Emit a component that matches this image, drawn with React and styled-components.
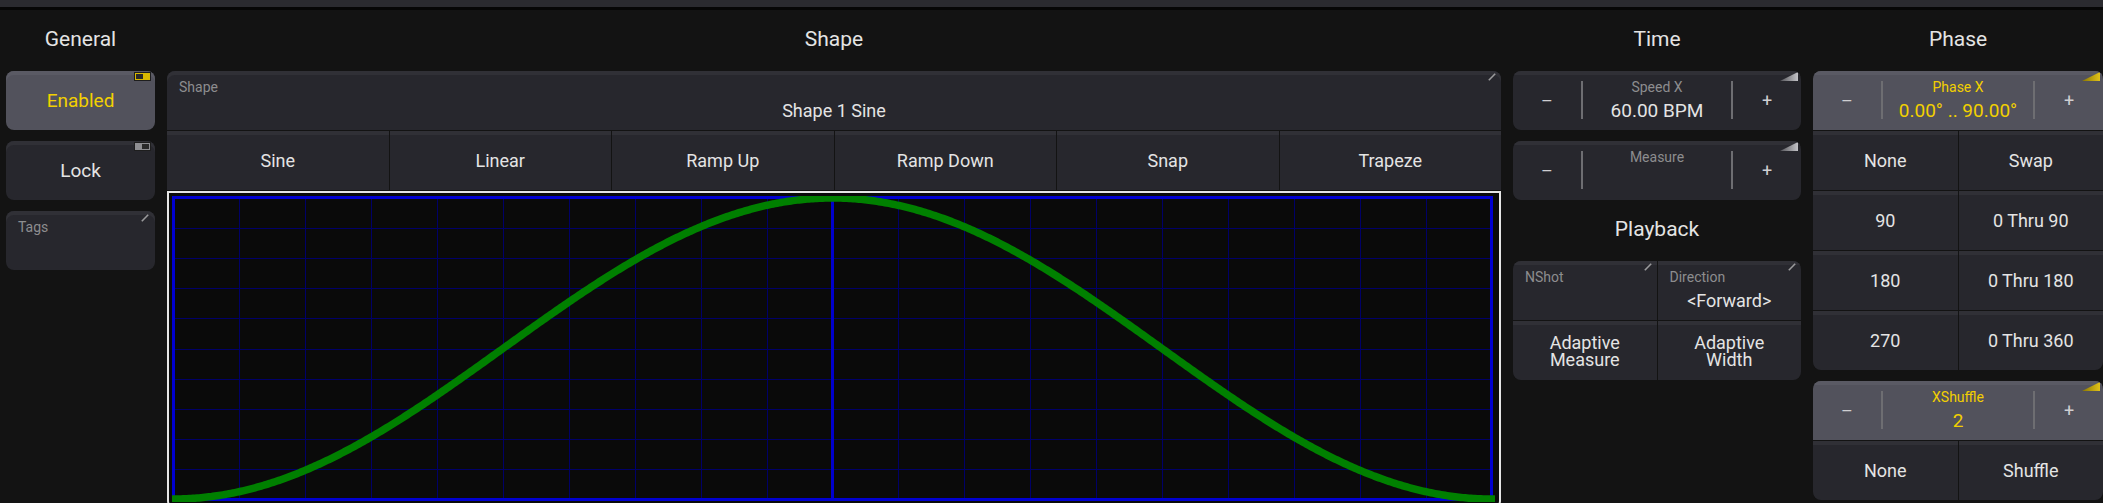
import React from 'react';
import styled, {createGlobalStyle} from 'styled-components';

const BG = '#131313';
const KEY = '#27272d';
const KEY_TOP = '#303036';
const KEY_ACTIVE = '#52525c';
const KEY_ACTIVE_TOP = '#5a5a64';
const TEXT = '#e4e4e4';
const LABEL = '#8d8d8f';
const YELLOW = '#f2d000';

const GlobalStyle = createGlobalStyle`
  html, body {
    margin: 0;
    padding: 0;
    background: ${BG};
  }
  body {
    font-family: Roboto, "Liberation Sans", sans-serif;
  }
`;

const Screen = styled.div`
  width: 2103px;
  height: 503px;
  overflow: hidden;
  background: ${BG};
  display: flex;
  flex-direction: column;
`;

const TopStrip = styled.div`
  flex: none;
  height: 7px;
  background: #2b2b30;
  border-bottom: 3px solid #070707;
`;

const Columns = styled.div`
  display: flex;
  gap: 12px;
  padding-left: 6px;
  flex: 1;
  min-height: 0;
`;

const Column = styled.div`
  flex: none;
  width: ${p => p.$width}px;
  display: flex;
  flex-direction: column;

  & > * {
    flex-shrink: 0;
  }
`;

const Title = styled.div`
  height: 61px;
  box-sizing: border-box;
  padding-bottom: 3px;
  display: flex;
  align-items: center;
  justify-content: center;
  font-size: 21px;
  color: ${TEXT};
`;

const Stack = styled.div`
  display: flex;
  flex-direction: column;
  gap: 11px;
`;

const Key = styled.div`
  position: relative;
  height: 59px;
  border-radius: 8px;
  background: ${p => (p.$active ? KEY_ACTIVE : KEY)};
  box-shadow: inset 0 4px 0 ${p => (p.$active ? KEY_ACTIVE_TOP : KEY_TOP)};
  color: ${p => (p.$yellow ? YELLOW : TEXT)};
  font-size: 19px;
  display: flex;
  align-items: center;
  justify-content: center;
`;

const TagsKey = styled(Key)`
  align-items: flex-start;
  justify-content: flex-start;
  padding: 8px 12px;
  box-sizing: border-box;
  font-size: 14px;
  line-height: 16px;
  color: ${LABEL};
`;

// small on/off indicator in the corner of a toggle key
const Toggle = styled.div`
  position: absolute;
  top: 1px;
  right: 4px;
  width: 17px;
  height: 9px;
  box-sizing: border-box;
  border: 1px solid #1e1e1e;
  background: ${p => (p.$on ? '#d8b800' : '#8e8e92')};
  display: flex;
  justify-content: ${p => (p.$on ? 'flex-start' : 'flex-end')};
  padding: 1px;

  &::after {
    content: '';
    width: 7px;
    height: 5px;
    background: #2a2a2a;
  }
`;

const Corner = styled.div`
  position: absolute;
  top: ${p => p.$top ?? 2}px;
  right: ${p => p.$right ?? 5}px;
  line-height: 0;
`;

const Pencil = ({top, right}) => (
  <Corner $top={top} $right={right}>
    <svg width="8" height="8" viewBox="0 0 8 8">
      <line x1="0.8" y1="7.2" x2="7.2" y2="0.8" stroke="#9a9a9c" strokeWidth="1.6" />
    </svg>
  </Corner>
);

const Wedge = ({yellow, id}) => (
  <Corner $top={1} $right={3}>
    <svg width="18" height="9" viewBox="0 0 18 9">
      <defs>
        <linearGradient id={id} x1="0" y1="0" x2="1" y2="0">
          <stop offset="0" stopColor={yellow ? '#8a7600' : '#55555a'} />
          <stop offset="1" stopColor={yellow ? '#e0c21a' : '#c4c4c8'} />
        </linearGradient>
      </defs>
      <polygon points="0,9 18,9 18,0" fill={`url(#${id})`} />
    </svg>
  </Corner>
);

// grid of keys that share one rounded outline
const Panel = styled.div`
  display: grid;
  grid-template-columns: ${p => p.$cols || '1fr 1fr'};
  grid-auto-rows: 59px;
  gap: 1px;
  background: ${BG};
  border-radius: 8px;
  overflow: hidden;
`;

const Cell = styled.div`
  position: relative;
  background: ${KEY};
  box-shadow: inset 0 4px 0 ${KEY_TOP};
  color: ${TEXT};
  font-size: 18px;
  line-height: 17px;
  display: flex;
  align-items: center;
  justify-content: center;
  text-align: center;
`;

const FieldCell = styled(Cell)`
  flex-direction: column;
  align-items: stretch;
  justify-content: flex-start;
  padding: 8px 12px 0;
`;

const FieldLabel = styled.div`
  font-size: 14px;
  line-height: 16px;
  color: ${LABEL};
  text-align: left;
`;

const FieldValue = styled.div`
  margin-top: 5px;
  font-size: 18px;
  line-height: 22px;
  color: ${TEXT};
  text-align: center;
`;

const SpinBox = styled.div`
  position: relative;
  grid-column: 1 / -1;
  display: grid;
  grid-template-columns: 68px 2px 1fr 2px 68px;
  background: ${p => (p.$active ? KEY_ACTIVE : KEY)};
  box-shadow: inset 0 4px 0 ${p => (p.$active ? KEY_ACTIVE_TOP : KEY_TOP)};
  color: ${p => (p.$active ? YELLOW : TEXT)};
`;

const SpinSign = styled.div`
  display: flex;
  align-items: center;
  justify-content: center;
  font-size: 18px;
  color: #cfcfd2;
`;

const SpinRule = styled.div`
  margin: 10px 0 11px;
  background: #6e6e72;
`;

const SpinCenter = styled.div`
  display: flex;
  flex-direction: column;
  align-items: center;
  padding-top: 8px;
`;

const SpinLabel = styled.div`
  font-size: 14px;
  line-height: 16px;
  color: ${p => (p.$active ? YELLOW : LABEL)};
`;

const SpinValue = styled.div`
  margin-top: 5px;
  font-size: 19px;
  line-height: 22px;
`;

const Spinner = ({label, value, active, id}) => (
  <SpinBox $active={active}>
    <SpinSign>–</SpinSign>
    <SpinRule />
    <SpinCenter>
      <SpinLabel $active={active}>{label}</SpinLabel>
      {value ? <SpinValue>{value}</SpinValue> : null}
    </SpinCenter>
    <SpinRule />
    <SpinSign>+</SpinSign>
    <Wedge yellow={active} id={id} />
  </SpinBox>
);

const ShapeField = styled.div`
  position: relative;
  height: 59px;
  box-sizing: border-box;
  padding: 8px 12px 0;
  border-radius: 8px 8px 0 0;
  background: ${KEY};
  box-shadow: inset 0 4px 0 ${KEY_TOP};
  display: flex;
  flex-direction: column;
`;

const ShapeButtons = styled.div`
  display: grid;
  grid-template-columns: repeat(6, 1fr);
  grid-auto-rows: 59px;
  gap: 1px;
  margin-top: 1px;
`;

const PlotFrame = styled.div`
  margin-top: 1px;
  height: 316px;
  box-sizing: border-box;
  border: 2px solid #e6e6e6;
  border-radius: 0 0 6px 6px;
  background: #0a0a0a;
  padding: 3px;
  line-height: 0;
`;

const PLOT_W = 1324;
const PLOT_H = 306;

function ShapePlot() {
  const x0 = 1.5;
  const x1 = 1319.5;
  const y0 = 1.5;
  const y1 = 303.5;
  const cols = 20;
  const rows = 10;
  const colW = (x1 - x0) / cols;
  const rowH = (y1 - y0) / rows;

  const verticals = [];
  for (let i = 1; i < cols; i++) {
    if (i === cols / 2) continue;
    verticals.push(Math.round(x0 + i * colW) + 0.5);
  }
  const horizontals = [];
  for (let j = 1; j < rows; j++) horizontals.push(Math.round(y0 + j * rowH) + 0.5);

  const curve = [];
  for (let x = -3; x <= PLOT_W; x += 2) {
    const t = (x - x0) / (x1 - x0);
    const y = 303 - 301 * (1 - Math.cos(2 * Math.PI * t)) / 2;
    curve.push(`${x.toFixed(1)},${y.toFixed(2)}`);
  }

  return (
    <svg width={PLOT_W} height={PLOT_H} viewBox={`0 0 ${PLOT_W} ${PLOT_H}`}>
      {verticals.map(x => (
        <line key={`v${x}`} x1={x} y1={y0} x2={x} y2={y1} stroke="#000068" strokeWidth="1" />
      ))}
      {horizontals.map(y => (
        <line key={`h${y}`} x1={x0} y1={y} x2={x1} y2={y} stroke="#000068" strokeWidth="1" />
      ))}
      <line x1={(x0 + x1) / 2} y1={y0} x2={(x0 + x1) / 2} y2={y1} stroke="#0000cc" strokeWidth="3" />
      <rect x={x0} y={y0} width={x1 - x0} height={y1 - y0} fill="none" stroke="#0000d0" strokeWidth="3" />
      <polyline points={curve.join(' ')} fill="none" stroke="#008000" strokeWidth="7.5" />
    </svg>
  );
}

const shapes = ['Sine', 'Linear', 'Ramp Up', 'Ramp Down', 'Snap', 'Trapeze'];

const phaseRows = [
  ['None', 'Swap'],
  ['90', '0 Thru 90'],
  ['180', '0 Thru 180'],
  ['270', '0 Thru 360']
];

export default function App() {
  return (
    <Screen>
      <GlobalStyle />
      <TopStrip />
      <Columns>
        <Column $width={149}>
          <Title>General</Title>
          <Stack>
            <Key $active $yellow>
              Enabled
              <Toggle $on />
            </Key>
            <Key>
              Lock
              <Toggle />
            </Key>
            <TagsKey>
              Tags
              <Pencil top={3} right={6} />
            </TagsKey>
          </Stack>
        </Column>

        <Column $width={1334}>
          <Title>Shape</Title>
          <ShapeField>
            <FieldLabel>Shape</FieldLabel>
            <FieldValue>Shape 1 Sine</FieldValue>
            <Pencil />
          </ShapeField>
          <ShapeButtons>
            {shapes.map(name => (
              <Cell key={name}>{name}</Cell>
            ))}
          </ShapeButtons>
          <PlotFrame>
            <ShapePlot />
          </PlotFrame>
        </Column>

        <Column $width={288}>
          <Title>Time</Title>
          <Stack>
            <Panel $cols="1fr">
              <Spinner label="Speed X" value="60.00 BPM" id="wedge-speed" />
            </Panel>
            <Panel $cols="1fr">
              <Spinner label="Measure" id="wedge-measure" />
            </Panel>
          </Stack>
          <Title>Playback</Title>
          <Panel>
            <FieldCell>
              <FieldLabel>NShot</FieldLabel>
              <Pencil />
            </FieldCell>
            <FieldCell>
              <FieldLabel>Direction</FieldLabel>
              <FieldValue>&lt;Forward&gt;</FieldValue>
              <Pencil />
            </FieldCell>
            <Cell>
              Adaptive
              <br />
              Measure
            </Cell>
            <Cell>
              Adaptive
              <br />
              Width
            </Cell>
          </Panel>
        </Column>

        <Column $width={290}>
          <Title>Phase</Title>
          <Stack>
            <Panel>
              <Spinner label="Phase X" value="0.00° .. 90.00°" active id="wedge-phase" />
              {phaseRows.map(([a, b]) => (
                <React.Fragment key={a}>
                  <Cell>{a}</Cell>
                  <Cell>{b}</Cell>
                </React.Fragment>
              ))}
            </Panel>
            <Panel>
              <Spinner label="XShuffle" value="2" active id="wedge-shuffle" />
              <Cell>None</Cell>
              <Cell>Shuffle</Cell>
            </Panel>
          </Stack>
        </Column>
      </Columns>
    </Screen>
  );
}
